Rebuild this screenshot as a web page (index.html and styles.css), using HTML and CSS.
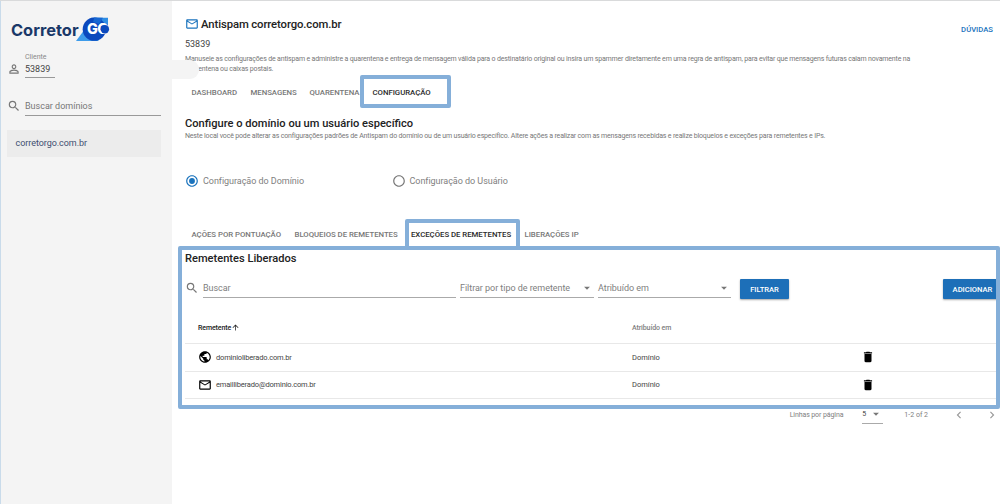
FILE: index.html
```html
<!DOCTYPE html>
<html lang="pt-BR">
<head>
    <meta charset="UTF-8">
    <meta name="viewport" content="width=device-width, initial-scale=1.0">
    <title>Antispam corretorgo.com.br</title>
    <link rel="stylesheet" href="styles.css">
</head>
<body>
    <svg class="sprite" aria-hidden="true">
        <symbol id="mail" viewBox="0 0 24 24"><path d="M22 6c0-1.1-.9-2-2-2H4c-1.1 0-2 .9-2 2v12c0 1.1.9 2 2 2h16c1.1 0 2-.9 2-2V6zm-2 0l-8 5-8-5h16zm0 12H4V8l8 5 8-5v10z"/></symbol>
        <symbol id="search" viewBox="0 0 24 24"><path d="M15.5 14h-.79l-.28-.27A6.47 6.47 0 0 0 16 9.5 6.5 6.5 0 1 0 9.5 16c1.61 0 3.09-.59 4.23-1.57l.27.28v.79l5 4.99L20.49 19l-4.99-5zm-6 0C7.01 14 5 11.99 5 9.5S7.01 5 9.5 5 14 7.01 14 9.5 11.99 14 9.5 14z"/></symbol>
        <symbol id="person" viewBox="0 0 24 24"><path d="M12 5.9a2.1 2.1 0 1 1 0 4.2 2.1 2.1 0 0 1 0-4.2m0 9c2.97 0 6.1 1.46 6.1 2.1v1.1H5.9V17c0-.64 3.13-2.1 6.1-2.1M12 4C9.79 4 8 5.79 8 8s1.79 4 4 4 4-1.79 4-4-1.79-4-4-4zm0 9c-2.67 0-8 1.34-8 4v3h16v-3c0-2.66-5.33-4-8-4z"/></symbol>
        <symbol id="globe" viewBox="0 0 24 24"><path d="M12 2C6.48 2 2 6.48 2 12s4.48 10 10 10 10-4.48 10-10S17.52 2 12 2zm-1 17.93c-3.95-.49-7-3.85-7-7.93 0-.62.08-1.21.21-1.79L9 15v1c0 1.1.9 2 2 2v1.93zm6.9-2.54c-.26-.81-1-1.39-1.9-1.39h-1v-3c0-.55-.45-1-1-1H8v-2h2c.55 0 1-.45 1-1V7h2c1.1 0 2-.9 2-2v-.41c2.93 1.19 5 4.06 5 7.41 0 2.08-.8 3.97-2.1 5.39z"/></symbol>
        <symbol id="trash" viewBox="0 0 24 24"><path d="M6 19c0 1.1.9 2 2 2h8c1.1 0 2-.9 2-2V7H6v12zM19 4h-3.5l-1-1h-5l-1 1H5v2h14V4z"/></symbol>
        <symbol id="caret" viewBox="0 0 24 24"><path d="M7 10l5 5 5-5z"/></symbol>
        <symbol id="arrow-up" viewBox="0 0 24 24"><path d="M4 12l1.41 1.41L11 7.83V20h2V7.83l5.58 5.59L20 12l-8-8-8 8z"/></symbol>
        <symbol id="left" viewBox="0 0 24 24"><path d="M15.41 7.41L14 6l-6 6 6 6 1.41-1.41L10.83 12z"/></symbol>
        <symbol id="right" viewBox="0 0 24 24"><path d="M10 6L8.59 7.41 13.17 12l-4.58 4.59L10 18l6-6z"/></symbol>
        <symbol id="radio-on" viewBox="0 0 24 24"><path d="M12 7a5 5 0 1 0 0 10 5 5 0 0 0 0-10zm0-5C6.48 2 2 6.48 2 12s4.48 10 10 10 10-4.48 10-10S17.52 2 12 2zm0 18a8 8 0 1 1 0-16 8 8 0 0 1 0 16z"/></symbol>
        <symbol id="radio-off" viewBox="0 0 24 24"><path d="M12 2C6.48 2 2 6.48 2 12s4.48 10 10 10 10-4.48 10-10S17.52 2 12 2zm0 18a8 8 0 1 1 0-16 8 8 0 0 1 0 16z"/></symbol>
    </svg>

    <div class="page">
        <aside class="sidebar">
            <div class="logo">
                <span class="logo-name">Corretor</span>
                <svg class="logo-badge" viewBox="0 0 34 24">
                    <path d="M0 24L9 12l14 12z" fill="#3d9bea"/>
                    <path d="M15 .7h17V12H20z" fill="#2f8de4"/>
                    <circle cx="18.3" cy="12.2" r="11.6" fill="#0b49bd"/>
                    <path d="M18.3.6L27 .7 23 7l-6-2z" fill="#1767d2"/>
                    <text x="11" y="16.9" class="logo-go">GO</text>
                    <circle cx="28.9" cy="12.2" r="4.2" fill="#0b49bd"/>
                </svg>
            </div>

            <div class="client">
                <svg class="icon"><use href="#person"/></svg>
                <div class="client-field">
                    <span class="client-label">Cliente</span>
                    <span class="client-value">53839</span>
                </div>
            </div>

            <div class="domain-search">
                <svg class="icon"><use href="#search"/></svg>
                <div class="domain-input">Buscar domínios</div>
            </div>

            <a class="domain-item">corretorgo.com.br</a>
        </aside>

        <main class="content">
            <header class="header">
                <div>
                    <h1 class="title"><svg class="icon blue"><use href="#mail"/></svg><span>Antispam corretorgo.com.br</span></h1>
                    <div class="account">53839</div>
                </div>
                <a class="help">DÚVIDAS</a>
            </header>
            <p class="intro">Manuseie as configurações de antispam e administre a quarentena e entrega de mensagem válida para o destinatário original ou insira um spammer diretamente em uma regra de antispam, para evitar que mensagens futuras caiam novamente na<br>quarentena ou caixas postais.</p>

            <nav class="tabs tabs-main">
                <a class="tab dashboard">DASHBOARD</a>
                <a class="tab messages">MENSAGENS</a>
                <a class="tab quarantine">QUARENTENA</a>
                <a class="tab active">CONFIGURAÇÃO</a>
            </nav>

            <h2 class="subtitle">Configure o domínio ou um usuário específico</h2>
            <p class="note">Neste local você pode alterar as configurações padrões de Antispam do domínio ou de um usuário específico. Altere ações a realizar com as mensagens recebidas e realize bloqueios e exceções para remetentes e IPs.</p>

            <div class="radios">
                <div class="radio"><svg class="icon blue"><use href="#radio-on"/></svg><span>Configuração do Domínio</span></div>
                <div class="radio"><svg class="icon"><use href="#radio-off"/></svg><span>Configuração do Usuário</span></div>
            </div>

            <nav class="tabs tabs-config">
                <a class="tab scoring">AÇÕES POR PONTUAÇÃO</a>
                <a class="tab blocks">BLOQUEIOS DE REMETENTES</a>
                <a class="tab exceptions active">EXCEÇÕES DE REMETENTES</a>
                <a class="tab ips">LIBERAÇÕES IP</a>
            </nav>

            <h3 class="list-title">Remetentes Liberados</h3>
            <div class="filters">
                <svg class="icon"><use href="#search"/></svg>
                <div class="field field-search">Buscar</div>
                <div class="field field-type"><span>Filtrar por tipo de remetente</span><svg class="icon"><use href="#caret"/></svg></div>
                <div class="field field-assigned"><span>Atribuído em</span><svg class="icon"><use href="#caret"/></svg></div>
                <button class="button">FILTRAR</button>
                <button class="button button-add">ADICIONAR</button>
            </div>

            <div class="table">
                <div class="row row-head">
                    <div class="sender">Remetente<svg class="sort"><use href="#arrow-up"/></svg></div>
                    <div class="assigned">Atribuído em</div>
                </div>
                <div class="row">
                    <div class="sender"><svg class="icon"><use href="#globe"/></svg><span>dominioliberado.com.br</span></div>
                    <div class="assigned">Domínio</div>
                    <svg class="icon"><use href="#trash"/></svg>
                </div>
                <div class="row">
                    <div class="sender"><svg class="icon"><use href="#mail"/></svg><span>emailliberado@dominio.com.br</span></div>
                    <div class="assigned">Domínio</div>
                    <svg class="icon"><use href="#trash"/></svg>
                </div>
            </div>

            <div class="pager">
                <span class="pager-label">Linhas por página</span>
                <div class="pager-size"><span>5</span><svg class="icon"><use href="#caret"/></svg></div>
                <span class="pager-range">1-2 of 2</span>
                <svg class="icon prev"><use href="#left"/></svg>
                <svg class="icon next"><use href="#right"/></svg>
            </div>
        </main>

        <div class="smudge"></div>
        <div class="mark mark-tab"></div>
        <div class="mark mark-subtab"></div>
        <div class="mark mark-list"></div>
    </div>
</body>
</html>
```
FILE: styles.css
```css
* {
    box-sizing: border-box;
}

body {
    margin: 0;
    font-family: Roboto, "Liberation Sans", sans-serif;
    font-size: 9px;
    color: #444;
    background: #fff;
}

h1, h2, h3, p {
    margin: 0;
    font-weight: 500;
    white-space: nowrap;
}

.sprite {
    display: none;
}

.icon {
    width: 14px;
    height: 14px;
    flex: none;
    fill: #777;
}

.icon.blue {
    fill: #1a73bd;
}

.page {
    position: relative;
    display: flex;
    width: 1000px;
    height: 504px;
    overflow: hidden;
    border-top: 1px solid #d9dadb;
}

/* Sidebar */
.sidebar {
    width: 172px;
    flex: none;
    padding: 16px 11px 0 6px;
    background: #f4f4f4;
    border-left: 1px solid #c9dbea;
}

.logo {
    display: flex;
    height: 24px;
    padding-left: 4px;
}

.logo-name {
    width: 65px;
    line-height: 26px;
    font-family: Inter, sans-serif;
    font-size: 16.4px;
    font-weight: 700;
    color: #1a3868;
}

.logo-badge {
    width: 34px;
    height: 24px;
    flex: none;
}

.logo-go {
    font-family: Inter, sans-serif;
    font-size: 14.5px;
    font-weight: 800;
    letter-spacing: -0.6px;
    fill: #fff;
}

.client {
    display: flex;
    align-items: center;
    gap: 4px;
    height: 24px;
    margin-top: 12px;
}

.client .icon {
    margin-top: 7px;
}

.client-field {
    display: flex;
    flex-direction: column;
    width: 30px;
    height: 25px;
    border-bottom: 1px solid #999;
}

.client-label {
    font-size: 7px;
    line-height: 9px;
    color: #888;
}

.client-value {
    line-height: 14px;
}

.domain-search {
    display: flex;
    align-items: center;
    gap: 4px;
    height: 20px;
    margin-top: 19px;
}

.domain-input {
    flex: 1;
    height: 20px;
    line-height: 21px;
    color: #777;
    border-bottom: 1px solid #999;
}

.domain-item {
    display: block;
    width: 154px;
    height: 27px;
    margin-top: 14px;
    padding-left: 8.5px;
    line-height: 27px;
    letter-spacing: -0.05px;
    color: #3f4f71;
    background: #ececec;
}

/* Content */
.content {
    width: 828px;
    padding: 13px 4px 0 13px;
}

.header {
    display: flex;
    justify-content: space-between;
}

.title {
    display: flex;
    align-items: center;
    gap: 2px;
    height: 20px;
    font-size: 11.3px;
    letter-spacing: -0.1px;
    color: #222;
}

.account {
    line-height: 20px;
    height: 19px;
}

.help {
    padding: 10px 3px 0 0;
    font-size: 7.7px;
    font-weight: 500;
    line-height: 11px;
    color: #1a73bd;
}

.intro, .note {
    font-size: 7px;
    font-weight: 400;
    line-height: 10px;
    letter-spacing: -0.167px;
    color: #777;
}

.intro {
    margin-top: 1px;
}

.tabs {
    display: flex;
    align-items: center;
    height: 18px;
    padding-left: 6.5px;
    font-size: 7.8px;
    font-weight: 500;
    letter-spacing: -0.03px;
    color: #777;
    white-space: nowrap;
}

.tabs-main {
    margin-top: 9px;
}

.tab.active {
    color: #2a2a2a;
}

.dashboard {
    width: 59px;
}

.messages {
    width: 59px;
}

.quarantine {
    width: 63px;
}

.subtitle {
    height: 16px;
    margin-top: 14px;
    font-size: 11.1px;
    line-height: 18px;
    color: #222;
}

.radios {
    display: flex;
    margin-top: 31px;
}

.radio {
    display: flex;
    align-items: center;
    gap: 4px;
    width: 206.5px;
    height: 18px;
    letter-spacing: -0.04px;
    color: #808080;
}

.tabs-config {
    margin-top: 35px;
}

.scoring {
    width: 103px;
}

.blocks {
    width: 116.5px;
}

.exceptions {
    width: 113.5px;
}

.list-title {
    height: 16px;
    margin-top: 7px;
    font-size: 11.1px;
    line-height: 18px;
    color: #222;
}

.filters {
    display: flex;
    align-items: flex-start;
    height: 20px;
    margin-top: 13px;
}

.filters > .icon {
    margin: 2px 4px 0 0;
}

.field {
    display: flex;
    align-items: center;
    justify-content: space-between;
    height: 19px;
    margin-right: 4px;
    font-size: 9px;
    letter-spacing: -0.04px;
    color: #808080;
    border-bottom: 1px solid #aaa;
}

.field-search {
    width: 253px;
}

.field-type {
    width: 134px;
}

.field-assigned {
    width: 133px;
    margin-right: 9px;
}

.button {
    width: 49px;
    height: 20px;
    padding: 0;
    font-family: inherit;
    font-size: 7.6px;
    font-weight: 500;
    color: #fff;
    background: #1d6fb8;
    border: none;
    border-radius: 1px;
    box-shadow: 0 1px 2px rgba(0, 0, 0, 0.35);
}

.button-add {
    width: 57px;
    margin-left: auto;
    margin-right: -4px;
    padding-left: 2px;
}

.table {
    margin-top: 13px;
    font-size: 7.5px;
}

.row {
    display: flex;
    align-items: center;
    height: 27.5px;
    padding-left: 13px;
    border-bottom: 1px solid #e8e8e8;
}

.row .icon {
    fill: #000;
}

.row-head {
    height: 32px;
    font-size: 7px;
    font-weight: 500;
    letter-spacing: -0.1px;
}

.sender {
    display: flex;
    align-items: center;
    gap: 4px;
    width: 434px;
}

.sender span {
    letter-spacing: -0.17px;
}

.row-head .sender {
    gap: 0;
    color: #222;
}

.row-head .assigned {
    color: #808080;
}

.sort {
    width: 9px;
    height: 9px;
    margin-bottom: 1px;
    fill: #222;
}

.assigned {
    width: 229px;
}

.pager {
    display: flex;
    align-items: center;
    justify-content: flex-end;
    height: 19px;
    margin-top: 6px;
    font-size: 7px;
    color: #808080;
}

.pager-label {
    margin-right: 19px;
    letter-spacing: -0.1px;
}

.pager-size {
    display: flex;
    align-items: center;
    justify-content: space-between;
    width: 21px;
    height: 19px;
    margin-right: 21px;
    color: #444;
    border-bottom: 1px solid #aaa;
}

.pager-range {
    margin-right: 24px;
}

.pager .prev, .pager .next {
    fill: #999;
}

.prev {
    margin-right: 19px;
}

.next {
    margin-right: -3px;
}

/* Highlights drawn over the screen */
.mark {
    position: absolute;
    border: 4px solid #85afd9;
    border-radius: 2px;
}

.mark-tab {
    left: 360px;
    top: 74px;
    width: 91px;
    height: 33px;
}

.mark-subtab {
    left: 405px;
    top: 218px;
    width: 115px;
    height: 31px;
}

.mark-list {
    left: 178px;
    top: 245px;
    width: 822px;
    height: 163px;
}

.smudge {
    position: absolute;
    left: 172px;
    top: 59px;
    width: 27px;
    height: 19px;
    background: #f4f4f4;
    border-radius: 0 9px 9px 0;
}
```
